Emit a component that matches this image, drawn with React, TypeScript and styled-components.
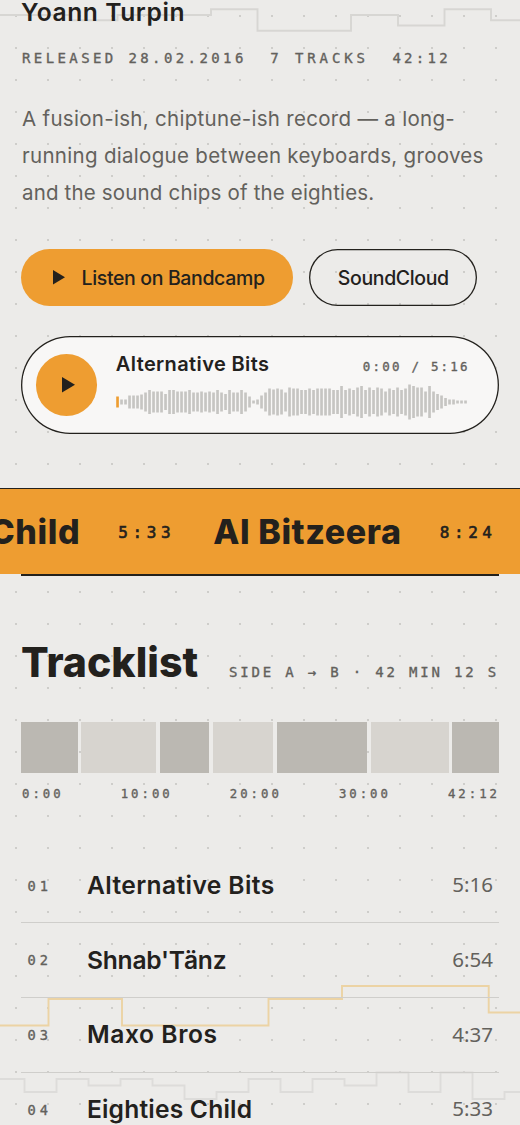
import React from 'react';
import styled, { createGlobalStyle } from 'styled-components';

const ink = '#23211d';
const muted = '#63615c';
const orange = '#ee9d31';
const paper = '#ecebe9';

const GlobalStyle = createGlobalStyle`
  * { box-sizing: border-box; }
  body { margin: 0; background: ${paper}; font-family: Inter, "Liberation Sans", sans-serif; color: ${ink}; }
`;

const Page = styled.main`
  position: relative;
  height: 1125px;
  overflow: hidden;
  background: radial-gradient(circle at 50% 50%, #cecdca 0.7px, rgba(206, 205, 202, 0) 1.5px) 0 0 / 32px 32px ${paper};
`;

const Waves = styled.svg`
  position: absolute;
  inset: 0;
  pointer-events: none;
  fill: none;
  stroke-width: 1.9;
`;

const Content = styled.div`
  position: relative;
`;

const Section = styled.section`
  padding: 0 21px;
`;

const Mono = styled.span<{ $size?: number; $track?: number }>`
  font-family: "DejaVu Sans Mono", "Liberation Mono", monospace;
  font-size: ${p => p.$size ?? 14}px;
  line-height: 16px;
  letter-spacing: ${p => p.$track ?? 3.4}px;
  color: ${muted};
  -webkit-text-stroke: 0.35px currentColor;
  white-space: nowrap;
`;

const Artist = styled.h2`
  margin: 0;
  font-size: 24.6px;
  line-height: 25px;
  font-weight: 600;
  letter-spacing: 0.58px;
`;

const Meta = styled.div`
  display: flex;
  gap: 23.5px;
  margin-top: 25px;
  padding-left: 1px;
`;

const Intro = styled.p`
  margin: 34px 0 0 1px;
  font-size: 20.5px;
  line-height: 37px;
  color: ${muted};
`;

const Line = styled.span<{ $track: number }>`
  display: block;
  white-space: nowrap;
  letter-spacing: ${p => p.$track}px;
`;

const Actions = styled.div`
  display: flex;
  gap: 16px;
  margin: 38px 0 0 0.3px;
`;

const Button = styled.a<{ $primary?: boolean }>`
  display: flex;
  align-items: center;
  justify-content: center;
  gap: 17px;
  width: ${p => (p.$primary ? 272 : 168)}px;
  height: 57px;
  padding-left: ${p => (p.$primary ? 2.5 : 0)}px;
  border-radius: 29px;
  font-size: 19.5px;
  font-weight: 500;
  letter-spacing: -0.36px;
  white-space: nowrap;
  color: ${ink};
  background: ${p => (p.$primary ? orange : 'transparent')};
  box-shadow: ${p => (p.$primary ? 'none' : `inset 0 0 0 1.3px ${ink}`)};
`;

const Player = styled.div`
  display: flex;
  align-items: center;
  gap: 18.5px;
  width: 477.5px;
  height: 98.3px;
  margin: 30px 0 0 0.3px;
  padding: 0 29px 0 14.5px;
  border-radius: 50px;
  background: #f8f7f6;
  box-shadow: inset 0 0 0 1.3px ${ink};
`;

const PlayButton = styled.button`
  display: flex;
  align-items: center;
  justify-content: center;
  flex: none;
  width: 61.5px;
  height: 61.5px;
  padding: 0 0 0 3px;
  border: 0;
  border-radius: 50%;
  background: ${orange};
`;

const PlayerBody = styled.div`
  flex: 1;
`;

const PlayerHead = styled.div`
  display: flex;
  justify-content: space-between;
  align-items: baseline;
  height: 26px;
  padding-top: 0.8px;
`;

const PlayerTitle = styled.span`
  font-size: 20px;
  line-height: 26px;
  font-weight: 600;
  letter-spacing: 0.38px;
`;

const Waveform = styled.svg`
  display: block;
  margin-top: 8px;
`;

const Marquee = styled.div`
  display: flex;
  align-items: center;
  justify-content: flex-end;
  gap: 38px;
  height: 86.3px;
  margin-top: 53.7px;
  padding-right: 23.4px;
  overflow: hidden;
  background: ${orange};
  border-top: 1px solid ${ink};
`;

const MarqueeTitle = styled.span`
  font-size: 34px;
  line-height: 40px;
  font-weight: 800;
  letter-spacing: 0.6px;
  white-space: nowrap;
`;

const MarqueeTime = styled(Mono)`
  padding-top: 3px;
  color: ${ink};
  -webkit-text-stroke-width: 0.6px;
`;

const TracklistSection = styled(Section)`
  &::before {
    content: '';
    display: block;
    height: 1.4px;
    background: ${ink};
  }
`;

const Head = styled.div`
  display: flex;
  justify-content: space-between;
  align-items: baseline;
  height: 50px;
  margin-top: 61px;
`;

const Title = styled.h1`
  margin: 0;
  font-size: 41px;
  line-height: 50px;
  font-weight: 800;
`;

const Strip = styled.div`
  display: flex;
  gap: 3.7px;
  height: 51px;
  margin-top: 35px;
`;

const Segment = styled.div<{ $seconds: number; $dark: boolean }>`
  flex: ${p => p.$seconds} 1 0;
  background: ${p => (p.$dark ? '#bbb8b2' : '#d7d4cf')};
`;

const Scale = styled.div`
  display: flex;
  justify-content: space-between;
  margin: 13.6px -1px 0 1px;
`;

const Tracks = styled.ol`
  margin: 46.5px 0 0;
  padding: 0;
  list-style: none;
`;

const Track = styled.li`
  display: flex;
  align-items: center;
  height: 74.7px;
  padding: 0 6px 0 6.5px;
  border-bottom: 1px solid #cfcecb;
`;

const TrackNo = styled(Mono)`
  width: 59.4px;
`;

const TrackName = styled.span<{ $track: number }>`
  flex: 1;
  padding-bottom: 1.2px;
  font-size: 24.6px;
  line-height: 30px;
  font-weight: 600;
  letter-spacing: ${p => p.$track}px;
`;

const TrackTime = styled.span`
  font-family: "Noto Sans", "Open Sans", sans-serif;
  font-size: 20.5px;
  line-height: 28px;
  padding-bottom: 2.4px;
  color: ${muted};
`;

const Triangle = ({ w, h }: { w: number; h: number }) => (
  <svg width={w} height={h} viewBox="0 0 12 14" preserveAspectRatio="none">
    <path d="M0 0 12 7 0 14Z" fill={ink} />
  </svg>
);

const levels = [
  11, 5, 5, 13, 13, 13, 15, 19, 24, 21, 21, 21, 16, 24, 24, 21, 21, 21, 24, 19, 19, 21, 19, 21, 19, 24, 19, 16, 24, 19,
  19, 24, 19, 11, 3, 5, 13, 19, 27, 25, 27, 25, 19, 29, 27, 27, 24, 24, 27, 24, 27, 27, 27, 27, 24, 24, 32, 24, 27, 24,
  29, 32, 24, 29, 24, 29, 27, 21, 27, 24, 29, 24, 27, 35, 32, 29, 29, 21, 32, 21, 16, 13, 8, 5, 5, 3, 3, 3,
];

const segments = [316, 414, 277, 333, 504, 432, 260];

const tracks = [
  { name: 'Alternative Bits', time: '5:16', track: 0.4 },
  { name: "Shnab'Tänz", time: '6:54', track: -0.2 },
  { name: 'Maxo Bros', time: '4:37', track: 0.6 },
  { name: 'Eighties Child', time: '5:33', track: 0.2 },
];

export default function App() {
  return (
    <Page>
      <GlobalStyle />
      <Waves width="520" height="1125" viewBox="0 0 520 1125">
        <path
          stroke="#d7d6d3"
          d="M0 15H70.5V20.3H117.5V15H211V9.3H257.5V30.7H351V15H398V25.5H444.5V9.3H491V20.3H520"
        />
        <path stroke="#ecd3a4" d="M0 1025.5H48.5V999H122V1025.5H268.5V999H342V986H488.7V1012.5H520" />
        <path
          stroke="#dddcda"
          d="M0 1079H24.5V1092H56.5V1079H88.5V1085.5H120.5V1079H152.5V1085.5H184.5V1099H216.5V1092H248.5V1079H280.5V1092H312.5V1079H344.5V1085.5H376.5V1072.5H408.5V1092H440.5V1072.5H472.5V1099H504.5V1092H520"
        />
      </Waves>
      <Content>
        <Section>
          <Artist>Yoann Turpin</Artist>
          <Meta>
            <Mono $track={3.4}>RELEASED 28.02.2016</Mono>
            <Mono $track={3.9}>7 TRACKS</Mono>
            <Mono $track={3.3}>42:12</Mono>
          </Meta>
          <Intro>
            <Line $track={0.3}>A fusion-ish, chiptune-ish record — a long-</Line>
            <Line $track={0.3}>running dialogue between keyboards, grooves</Line>
            <Line $track={0.17}>and the sound chips of the eighties.</Line>
          </Intro>
          <Actions>
            <Button $primary>
              <Triangle w={12} h={14.5} />
              Listen on Bandcamp
            </Button>
            <Button>SoundCloud</Button>
          </Actions>
          <Player>
            <PlayButton aria-label="Play">
              <Triangle w={13} h={15.5} />
            </PlayButton>
            <PlayerBody>
              <PlayerHead>
                <PlayerTitle>Alternative Bits</PlayerTitle>
                <Mono $size={12.5} $track={2.2}>0:00 / 5:16</Mono>
              </PlayerHead>
              <Waveform width="352" height="36" viewBox="0 0 352 36">
                {levels.map((level, i) => (
                  <rect
                    key={i}
                    x={i * 4 + 0.2}
                    y={18 - level / 2}
                    width={2.65}
                    height={level}
                    fill={i === 0 ? orange : '#c6c5c2'}
                  />
                ))}
              </Waveform>
            </PlayerBody>
          </Player>
        </Section>
        <Marquee>
          <MarqueeTitle>Child</MarqueeTitle>
          <MarqueeTime $size={16} $track={4.6}>5:33</MarqueeTime>
          <MarqueeTitle>Al Bitzeera</MarqueeTitle>
          <MarqueeTime $size={16} $track={4.6}>8:24</MarqueeTime>
        </Marquee>
        <TracklistSection>
          <Head>
            <Title>Tracklist</Title>
            <Mono $track={2.82}>SIDE A → B · 42 MIN 12 S</Mono>
          </Head>
          <Strip>
            {segments.map((seconds, i) => (
              <Segment key={i} $seconds={seconds} $dark={i % 2 === 0} />
            ))}
          </Strip>
          <Scale>
            {['0:00', '10:00', '20:00', '30:00', '42:12'].map(label => (
              <Mono key={label} $size={12.3} $track={3}>{label}</Mono>
            ))}
          </Scale>
          <Tracks>
            {tracks.map((t, i) => (
              <Track key={t.name}>
                <TrackNo $size={13.7} $track={4}>{`0${i + 1}`}</TrackNo>
                <TrackName $track={t.track}>{t.name}</TrackName>
                <TrackTime>{t.time}</TrackTime>
              </Track>
            ))}
          </Tracks>
        </TracklistSection>
      </Content>
    </Page>
  );
}
